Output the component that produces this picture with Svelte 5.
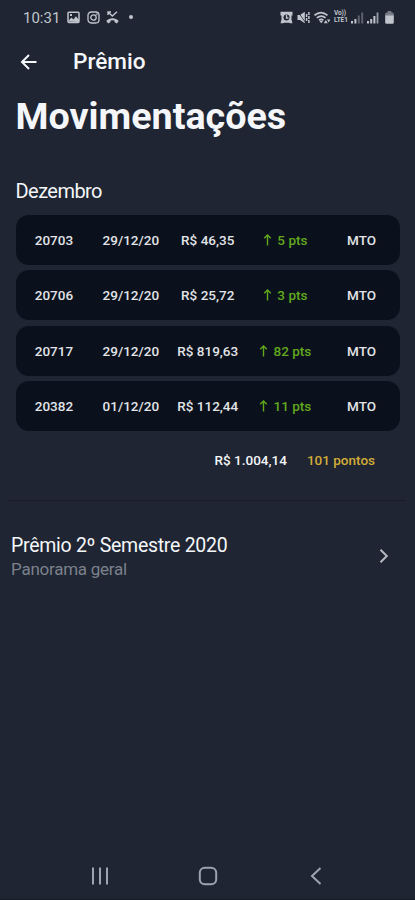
<script>
    const movements = [
        { id: '20703', date: '29/12/20', value: 'R$ 46,35', points: 5, type: 'MTO' },
        { id: '20706', date: '29/12/20', value: 'R$ 25,72', points: 3, type: 'MTO' },
        { id: '20717', date: '29/12/20', value: 'R$ 819,63', points: 82, type: 'MTO' },
        { id: '20382', date: '01/12/20', value: 'R$ 112,44', points: 11, type: 'MTO' }
    ]
</script>

<div class="screen">
    <div class="statusBar">
        <span class="clock">10:31</span>
        <div class="notifications">
            <svg width="13" height="13" viewBox="0 0 13 13">
                <rect x="1" y="1.3" width="11" height="10.2" rx="1" fill="none" stroke="currentColor" stroke-width="1.5" />
                <path d="M1 10.5l3.4-4 2 2 2.6-3.3 3 3.8v2z" fill="currentColor" />
                <rect x="3" y="3" width="2" height="2" fill="currentColor" />
            </svg>
            <svg width="13" height="13" viewBox="0 0 13 13" fill="none" stroke="currentColor" stroke-width="1.3">
                <rect x="1" y="1" width="11" height="11" rx="3.2" />
                <circle cx="6.5" cy="6.5" r="2.7" />
                <circle cx="9.7" cy="3.4" r=".3" />
            </svg>
            <svg width="13" height="13" viewBox="0 0 13 13">
                <path d="M2 1l4.3 4L11 .8M2 4V1h3" fill="none" stroke="currentColor" stroke-width="1.4" />
                <path d="M.3 10C3.500 6.200 9.500 6.200 12.700 10L10.800 12.500 8.500 11V9.500Q6.500 9 4.500 9.500V11L2.200 12.500z" fill="currentColor" />
            </svg>
            <i class="dot"></i>
        </div>
        <div class="system">
            <svg width="13" height="13" viewBox="0 0 13 13">
                <path d="M.5.8h12v3.700h-1v4.300l1 3.500h-2.500l-1-.5H4l-1 .5H.5l1-3.500V4.500h-1z" fill="currentColor" />
                <circle cx="6.500" cy="6.600" r="3" fill="#1f2532" />
                <path d="M6.500 4v3h2" fill="none" stroke="currentColor" stroke-width="1.300" />
            </svg>
            <svg class="mute" width="13" height="13" viewBox="0 0 13 13">
                <path d="M.5 4h2.500L7.800.8v11.400L3 9H.5z" fill="currentColor" />
                <path d="M1 1l7.500 10.500" stroke="#1f2532" stroke-width=".8" />
                <path d="M9.600 3v7M11.900 1v11" stroke="currentColor" stroke-width="1.500" stroke-dasharray="3 1" />
            </svg>
            <svg class="wifi" width="17" height="13" viewBox="0 0 17 13">
                <path d="M.5 4.300q6.500-5.500 13 0M2.800 6.800q4.400-3.500 8.800 0M5 9.100q2.200-1.500 4.400 0" fill="none" stroke="currentColor" stroke-width="1.700" />
                <path d="M7.200 12.200L5.300 9.800h4zM9.800 12.300l2-3.300 2 3.300zM13 8.500h3.400l-1.700 2.900z" fill="currentColor" />
            </svg>
            <div class="volte"><span>Vo))</span><span>LTE1</span></div>
            <svg width="13" height="13" viewBox="0 0 13 13" fill="currentColor">
                <path d="M0 10h2v2.500H0zM3.400 8h2v4.500h-2z" />
                <path d="M6.800 4.500h2v8h-2zM10.200 1.500h2v11h-2z" opacity=".38" />
            </svg>
            <svg class="signal" width="13" height="13" viewBox="0 0 13 13" fill="currentColor">
                <path d="M0 10h2v2.500H0zM3.200 8h2v4.500h-2zM6.400 5h2v7.500h-2z" />
                <path d="M9.600 1.500h1.800v11H9.600z" opacity=".75" />
            </svg>
            <svg class="battery" width="9" height="13" viewBox="0 0 9 13" fill="currentColor">
                <path d="M2.700 0h3.600v1.500h1q1.500 0 1.500 1.500v2H.2V3q0-1.500 1.500-1.500h1z" opacity=".55" />
                <path d="M.2 4.500h8.600v7q0 1.300-1.300 1.300h-6q-1.300 0-1.300-1.300z" />
            </svg>
        </div>
    </div>

    <header>
        <svg class="back" width="18" height="18" viewBox="0 0 18 18">
            <path d="M16.500 9H2M9 2L2 9l7 7" />
        </svg>
        <h2>Prêmio</h2>
    </header>

    <main>
        <h1>Movimentações</h1>
        <h3>Dezembro</h3>
        <div class="list">
            {#each movements as item}
                <div class="card">
                    <span>{item.id}</span>
                    <span>{item.date}</span>
                    <span>{item.value}</span>
                    <span class="points">
                        <svg width="9" height="12" viewBox="0 0 9 12">
                            <path d="M4.500 11.500V1.200M1.200 4.300l3.300-3.300 3.300 3.300" />
                        </svg>
                        {item.points} pts
                    </span>
                    <span>{item.type}</span>
                </div>
            {/each}
        </div>
        <div class="totals">
            <span>R$ 1.004,14</span>
            <span class="totalPoints">101 pontos</span>
        </div>
    </main>

    <div class="summary">
        <div>
            <p class="title">Prêmio 2º Semestre 2020</p>
            <p class="subtitle">Panorama geral</p>
        </div>
        <svg width="10" height="16" viewBox="0 0 10 16">
            <path d="M1.500 1.800L7.800 8l-6.300 6.200" />
        </svg>
    </div>

    <nav>
        <svg width="20" height="20" viewBox="0 0 20 20">
            <path d="M3 1.500v17M10 1.500v17M17 1.500v17" />
        </svg>
        <svg width="20" height="20" viewBox="0 0 20 20">
            <rect x="1.800" y="1.800" width="16.400" height="16.400" rx="5" />
        </svg>
        <svg width="20" height="20" viewBox="0 0 20 20">
            <path d="M14.500 2L6 10l8.500 8" />
        </svg>
    </nav>
</div>

<style>
    :global(body) {
        background-color: #1f2532;
    }

    .screen {
        display: flex;
        flex-direction: column;
        box-sizing: border-box;
        width: 100%;
        height: 900px;
        overflow: hidden;
        font-family: Roboto, sans-serif;
        color: #f4f6f9;
        background-color: #1f2532;
        border-bottom: 1px solid #151a27;
    }

    svg {
        display: block;
        flex: none;
    }

    h1, h2, h3, p {
        margin: 0;
        white-space: nowrap;
    }

    .statusBar {
        display: flex;
        align-items: center;
        height: 34px;
        padding: 0 21px 0 23px;
        color: #c0c5cd;
    }

    .clock {
        width: 44px;
        padding-top: 1px;
        font-size: 15px;
        line-height: 32px;
    }

    .notifications {
        display: flex;
        align-items: center;
        gap: 6.5px;
    }

    .dot {
        width: 4px;
        height: 4px;
        margin-left: 3px;
        border-radius: 50%;
        background-color: #c0c5cd;
    }

    .system {
        display: flex;
        align-items: center;
        margin-left: auto;
    }

    .mute {
        margin-left: 4px;
    }

    .wifi {
        margin-left: 4px;
    }

    .volte {
        display: flex;
        flex-direction: column;
        width: 15px;
        margin: 0 2px 0 3px;
        font-size: 6.5px;
        font-weight: 700;
        line-height: 7px;
        letter-spacing: -0.1px;
    }

    .signal {
        margin-left: 3px;
    }

    .battery {
        margin-left: 5px;
    }

    header {
        display: flex;
        align-items: center;
        height: 55px;
        padding-left: 20px;
    }

    .back {
        fill: none;
        stroke: #f4f6f9;
        stroke-width: 2;
    }

    h2 {
        margin-left: 35px;
        font-size: 22.6px;
        font-weight: 500;
    }

    main {
        height: 411px;
        margin: 0 9px 0 8px;
        padding: 0 6px 0 7.5px;
        border-bottom: 1px solid #171c28;
    }

    h1 {
        padding-top: 4px;
        font-size: 37.7px;
        font-weight: 700;
        line-height: 47px;
    }

    h3 {
        margin-top: 39px;
        font-size: 20px;
        font-weight: 400;
        letter-spacing: -0.55px;
        line-height: 24px;
    }

    .list {
        display: flex;
        flex-direction: column;
        gap: 5.5px;
        margin-top: 11.5px;
    }

    .card {
        display: grid;
        grid-template-columns: repeat(5, 1fr);
        align-items: center;
        height: 50px;
        border-radius: 13px;
        background-color: #0a111c;
        color: #e2e4e8;
        font-size: 13.5px;
        font-weight: 500;
        text-align: center;
        white-space: nowrap;
    }

    .points {
        display: flex;
        align-items: center;
        justify-content: center;
        gap: 5.5px;
        padding-left: 1px;
        color: #61a81c;
    }

    .points svg {
        fill: none;
        stroke: #61a81c;
        stroke-width: 1.4;
    }

    .totals {
        display: flex;
        justify-content: flex-end;
        gap: 20px;
        padding: 20px 25px 0 0;
        font-size: 13.5px;
        font-weight: 500;
        line-height: 18px;
    }

    .totalPoints {
        color: #d3ad38;
    }

    .summary {
        display: flex;
        align-items: center;
        justify-content: space-between;
        padding: 31px 26px 0 11px;
    }

    .title {
        padding-top: 1px;
        font-size: 19.5px;
        letter-spacing: -0.28px;
        line-height: 26px;
    }

    .subtitle {
        font-size: 17px;
        letter-spacing: -0.25px;
        line-height: 21px;
        color: #7b818c;
    }

    .summary svg {
        fill: none;
        stroke: #b4b8bf;
        stroke-width: 2;
    }

    nav {
        display: flex;
        justify-content: space-between;
        margin-top: auto;
        padding: 0 89px 13px 90px;
    }

    nav svg {
        fill: none;
        stroke: #9da3af;
        stroke-width: 2;
    }
</style>
